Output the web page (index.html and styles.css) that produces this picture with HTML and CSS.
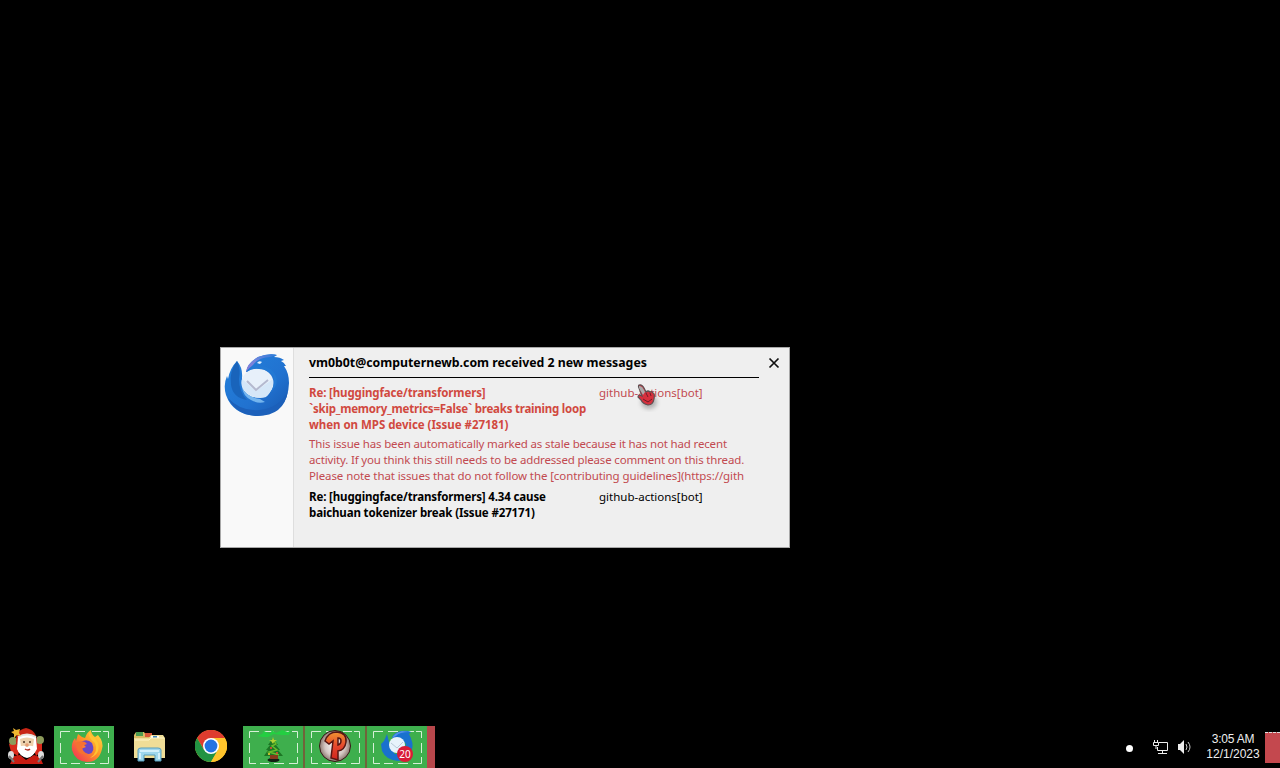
FILE: index.html
```html
<!DOCTYPE html>
<html lang="en">
<head>
    <meta charset="UTF-8">
    <meta name="viewport" content="width=device-width, initial-scale=1.0">
    <title>Desktop</title>
    <link rel="stylesheet" href="styles.css">
</head>
<body>
    <main class="desktop">
        <section class="alert">
            <div class="alert-side">
                <svg width="66" height="64" viewBox="0 0 66 64">
                    <defs>
                        <linearGradient id="bird" x1="0" y1="0" x2="1" y2="1">
                            <stop offset="0" stop-color="#2381dc"/>
                            <stop offset="0.6" stop-color="#2172d0"/>
                            <stop offset="1" stop-color="#1857af"/>
                        </linearGradient>
                        <linearGradient id="crest" x1="0" y1="1" x2="1" y2="0">
                            <stop offset="0" stop-color="#8b79d5"/>
                            <stop offset="0.5" stop-color="#6f86dd"/>
                            <stop offset="1" stop-color="#2c7bd8"/>
                        </linearGradient>
                    </defs>
                    <path d="M13 7Q19 14 18 24L19 35L28 43L43 42L49 30Q46 18 35 17L22 18Q23 10 34 3Q45-1 53 1L50 3Q56 3 60 6L57 7Q61 9 62 12L60 12Q65 19 65 29Q64 60 33 62Q9 61 2 41Q-1 31 3 22L4 25Q6 14 13 7Z" fill="url(#bird)"/>
                    <path d="M22 18Q23 9 34 3Q44-1 53 1L46 3Q35 3 29 11Q25 14 22 18Z" fill="url(#crest)"/>
                    <path d="M13 7Q17 15 15 25Q15 38 23 46Q9 44 7 31Q5 17 13 7Z" fill="#1964bb"/>
                    <ellipse cx="33.5" cy="29" rx="16" ry="14.5" fill="#e7f0fa"/>
                    <path d="M18 25L32 37L49 25Q50 36 42 43Q33 46 24 40Q16 34 18 25Z" fill="#d5e7f8"/>
                    <path d="M18 33Q22 43 36 45L41 48Q34 50 27 46Q19 42 18 33Z" fill="#74b5ee"/>
                    <path d="M23 27L32 36L44 26" fill="none" stroke="#b4b9cf" stroke-width="2"/>
                    <path d="M22 18Q28 14 35 15Q44 15 49 22Q52 30 46 39Q55 31 52 22Q48 13 38 12Q28 10 22 18Z" fill="#2379d4"/>
                    <path d="M4 44Q17 58 36 56Q55 54 64 37Q60 62 33 62Q12 61 4 44Z" fill="#1c60ba"/>
                    <path d="M33 9Q35 6 38 8L36 10Z" fill="#e3f1ff"/>
                </svg>
            </div>
            <div class="alert-body">
                <header class="alert-header">
                    <h1>vm0b0t@computernewb.com received 2 new messages</h1>
                </header>
                <article class="message selected">
                    <div class="message-row">
                        <h2 class="subject">
                            <span>Re: [huggingface/transformers]</span>
                            <span class="long">`skip_memory_metrics=False` breaks training loop</span>
                            <span class="short">when on MPS device (Issue #27181)</span>
                        </h2>
                        <div class="sender">github-actions[bot]</div>
                    </div>
                    <p class="preview">
                        <span>This issue has been automatically marked as stale because it has not had recent</span>
                        <span>activity. If you think this still needs to be addressed please comment on this thread.</span>
                        <span class="last">Please note that issues that do not follow the [contributing guidelines](https://gith</span>
                    </p>
                </article>
                <article class="message">
                    <div class="message-row">
                        <h2 class="subject">
                            <span>Re: [huggingface/transformers] 4.34 cause</span>
                            <span>baichuan tokenizer break (Issue #27171)</span>
                        </h2>
                        <div class="sender">github-actions[bot]</div>
                    </div>
                </article>
            </div>
            <div class="alert-close">
                <svg width="12" height="12" viewBox="0 0 12 12"><path d="M1.5 1.5L10.5 10.5M10.5 1.5L1.5 10.5" stroke="#111" stroke-width="1.7"/></svg>
            </div>
        </section>
        <svg class="cursor" width="24" height="28" viewBox="0 0 24 28">
            <ellipse cx="12" cy="18" rx="8" ry="7" fill="#555" opacity="0.4" class="cursor-shadow"/>
            <path d="M2 1Q5 0 7 4L9 8Q11 6 13 8Q15 7 16 9Q18 9 17 15Q16 21 11 21Q6 20 4 16L1 13Q1 10 5 12L2 4Q1 2 2 1Z" fill="#d7303d" stroke="#5d5053" stroke-width="1.2"/>
            <path d="M2 2Q5 1 8 8L6 11L2 4Z" fill="#aaa"/>
            <path d="M9 9L11 13M13 9L14 12M6 15L11 18L15 15" stroke="#701c28" fill="none"/>
        </svg>
    </main>
    <footer class="taskbar">
        <div class="task start">
            <svg width="40" height="38" viewBox="0 0 40 38">
                <path d="M4 37L8 29L14 28L20 33L28 28L34 30L37 37Z" fill="#c91c12"/>
                <path d="M3 17L8 14L14 20L12 29L5 25ZM36 16L31 14L27 20L30 29L36 24Z" fill="#d92b1c"/>
                <circle cx="7" cy="14" r="4" fill="#8c9b5b"/><circle cx="34" cy="13" r="4" fill="#8c9b5b"/>
                <path d="M10 16Q9 3 20 1Q31 3 31 16L28 20H13Z" fill="#c82515"/>
                <path d="M12 10Q20 5 30 10L31 22Q27 30 21 30Q14 29 11 22Z" fill="#fff"/>
                <path d="M14 12Q21 9 28 12L27 20Q21 23 15 20Z" fill="#edd1ac"/>
                <path d="M11 21Q17 17 21 20Q25 17 30 21Q28 30 21 31Q13 29 11 21Z" fill="#fff"/>
                <path d="M12 10Q21 5 30 10" fill="none" stroke="#e8e2da" stroke-width="2"/>
                <circle cx="18" cy="15" r="1" fill="#492f1e"/><circle cx="24" cy="15" r="1" fill="#492f1e"/>
                <circle cx="21" cy="18" r="1.8" fill="#e69d72"/>
                <path d="M19 22Q22 24 24 22" fill="none" stroke="#b22b20" stroke-width="1.5"/>
                <path d="M7 1L10 3L14 2L13 6L15 9L11 8L8 11L8 7L5 5L8 4Z" fill="#f0b830"/>
                <ellipse cx="5" cy="28" rx="3" ry="4" fill="#ddd"/><ellipse cx="35" cy="28" rx="3" ry="4" fill="#ddd"/>
                <path d="M3 29L8 35M37 29L32 35" stroke="#777" stroke-width="2"/>
            </svg>
        </div>
        <div class="task open firefox">
            <svg class="dashes" width="60" height="42" viewBox="0 0 60 42"><path d="M6.5 12V5.5H16M21 5.5H31M38 5.5H47M49 5.5H54.5V12M54.5 17V27M54.5 31V37.5H46M41 37.5H31M26 37.5H17M13 37.5H6.5V31M6.5 27V17"/></svg>
            <svg width="34" height="34" viewBox="0 0 34 34">
                <defs><linearGradient id="fox" x1="1" y1="0" x2="0" y2="1"><stop offset="0" stop-color="#ffe546"/><stop offset="0.45" stop-color="#ff9626"/><stop offset="1" stop-color="#ef255c"/></linearGradient></defs>
                <path d="M8 5L12 8L15 9Q17 3 21 1Q21 5 25 8L28 6Q34 13 32 20Q29 33 17 33Q5 32 2 21Q1 14 5 9L6 12Z" fill="url(#fox)"/>
                <path d="M11 13Q17 9 22 14Q26 23 19 25Q13 25 11 20L16 18Z" fill="#6847c7"/>
                <path d="M5 14Q10 11 15 13L17 15L12 17Q12 23 18 25Q12 27 8 22Z" fill="#f57132"/>
                <path d="M19 3Q18 9 25 14Q29 23 20 29Q31 25 28 14L25 9Q21 7 19 3Z" fill="#ffc532"/>
            </svg>
        </div>
        <div class="task">
            <svg width="34" height="32" viewBox="0 0 34 32">
                <path d="M2 5L4 2H12L14 5H31V28H2Z" fill="#d9bd65"/>
                <path d="M4 2H11V6H4Z" fill="#4b9b51"/><path d="M13 3H20V7H13Z" fill="#d85739"/>
                <path d="M2 8H17L19 5H31L33 8V28H2Z" fill="#efdd97"/>
                <path d="M19 6H27V8H19Z" fill="#fff"/><path d="M21 6H25V8H21Z" fill="#4187bd"/>
                <path d="M3 10H17L19 8H32" fill="none" stroke="#fff6c8"/>
                <path d="M6 31V20Q6 18 9 18H26Q29 18 29 20V31H23V25H12V31Z" fill="#9ed7ed" stroke="#579ebc"/>
                <path d="M8 21H27M8 23V29M27 23V29" fill="none" stroke="#e4f9ff" stroke-width="1.5"/>
            </svg>
        </div>
        <div class="task">
            <svg width="32" height="32" viewBox="0 0 32 32">
                <circle cx="16" cy="16" r="16" fill="#ffc42c"/>
                <path d="M2.1 8A16 16 0 0 1 29.9 8H16L9.1 20Z" fill="#de3c2e"/>
                <path d="M2.1 8A16 16 0 0 0 16 32L22.9 20H9.1Z" fill="#229342"/>
                <path d="M29.9 8A16 16 0 0 1 16 32L22.9 20L16 8Z" fill="#ffc42c"/>
                <circle cx="16" cy="16" r="8" fill="#fff"/><circle cx="16" cy="16" r="6.4" fill="#2373e3"/>
            </svg>
        </div>
        <div class="task open">
            <svg class="dashes" width="60" height="42" viewBox="0 0 60 42"><path d="M6.5 12V5.5H16M21 5.5H31M38 5.5H47M49 5.5H54.5V12M54.5 17V27M54.5 31V37.5H46M41 37.5H31M26 37.5H17M13 37.5H6.5V31M6.5 27V17"/></svg>
            <svg width="36" height="34" viewBox="0 0 36 34">
                <path d="M2 7L7 5L9 2L15 5L17 1L21 4L27 1L33 3L36 1L34 6L26 6L19 5L13 8L8 8Z" fill="#24ce42"/>
                <path d="M18 9L23 16L21 16L25 21L23 21L28 27H9L13 21L11 21L15 16L13 16Z" fill="#1c7624"/>
                <path d="M18 10L21 15L17 17L22 21L14 23L24 26" fill="none" stroke="#67bb2c" stroke-width="1.5"/>
                <path d="M18 8L19 11L22 11L19 13L18 15L16 12L14 11H17Z" fill="#b2d235"/>
                <circle cx="16" cy="19" r="1" fill="#ed4939"/><circle cx="22" cy="24" r="1" fill="#ed4939"/><circle cx="14" cy="25" r="1" fill="#f4d537"/>
                <ellipse cx="18.5" cy="31" rx="6" ry="2" fill="#111e12"/><path d="M15 26H23V30H15Z" fill="#863a1b"/>
            </svg>
        </div>
        <div class="task open">
            <svg class="dashes" width="60" height="42" viewBox="0 0 60 42"><path d="M6.5 12V5.5H16M21 5.5H31M38 5.5H47M49 5.5H54.5V12M54.5 17V27M54.5 31V37.5H46M41 37.5H31M26 37.5H17M13 37.5H6.5V31M6.5 27V17"/></svg>
            <svg width="34" height="34" viewBox="0 0 34 34">
                <defs>
                    <radialGradient id="ball"><stop offset="0" stop-color="#fff"/><stop offset="0.65" stop-color="#d4c6c2"/><stop offset="1" stop-color="#8b7770"/></radialGradient>
                    <linearGradient id="pin" x1="0" y1="0" x2="0" y2="1"><stop offset="0" stop-color="#f09431"/><stop offset="0.5" stop-color="#e5472d"/><stop offset="1" stop-color="#cf241c"/></linearGradient>
                </defs>
                <circle cx="17" cy="17" r="15.5" fill="url(#ball)" stroke="#341814"/>
                <path d="M7 12Q10 3 19 3Q29 4 28 13Q27 21 20 22L20 31L13 29L15 12L11 15ZM20 9L20 16Q23 15 23 12Q23 9 20 9Z" fill="url(#pin)" fill-rule="evenodd" stroke="#571612" stroke-width="1.5"/>
            </svg>
        </div>
        <div class="task open stacked">
            <svg class="dashes" width="60" height="42" viewBox="0 0 60 42"><path d="M6.5 12V5.5H16M21 5.5H31M38 5.5H47M49 5.5H54.5V12M54.5 17V27M54.5 31V37.5H46M41 37.5H31M26 37.5H17M13 37.5H6.5V31M6.5 27V17"/></svg>
            <svg width="34" height="34" viewBox="0 0 34 34">
                <path d="M7 5L10 17L15 25L24 24L26 15L20 9L12 9Q13 4 21 2Q27 1 31 3L29 5Q34 14 32 21Q28 31 18 32Q6 31 2 22L1 15L4 12Z" fill="#1971ce"/>
                <path d="M12 9Q14 4 22 2L30 3Q19 3 16 7Z" fill="#538eea"/>
                <circle cx="17" cy="16" r="8" fill="#e7f3fb"/>
                <path d="M11 14L17 19L23 13" fill="none" stroke="#b9cbd9"/>
            </svg>
            <span class="badge">20</span>
        </div>
        <div class="tray">
            <span class="tray-dot"></span>
            <svg class="network" width="16" height="16" viewBox="0 0 16 16"><path d="M6 3.5H14.5V11.5H4.5V8M9.5 12V14M5 14.5H14M1.5 1V4M4.5 1V4M0.5 3.5H5.5V6.5H0.5V3.5M3 7V10" fill="none" stroke="#eee"/></svg>
            <svg class="volume" width="16" height="16" viewBox="0 0 16 16"><path d="M1 5H3L7 1V15L3 11H1Z" fill="#eee"/><path d="M9 5Q11 8 9 11M11 3Q15 8 11 13" fill="none" stroke="#ccc"/></svg>
            <div class="clock"><span class="time">3:05 AM</span><span>12/1/2023</span></div>
            <div class="show-desktop"></div>
        </div>
    </footer>
</body>
</html>
```
FILE: styles.css
```css
* {
    box-sizing: border-box;
}
body {
    margin: 0;
    height: 768px;
    display: flex;
    flex-direction: column;
    overflow: hidden;
    background-color: #000;
    font-family: "Noto Sans", "Open Sans", sans-serif;
    font-size: 12px;
}
h1, h2, p {
    margin: 0;
}
svg {
    display: block;
    flex: none;
}
.desktop {
    flex: 1;
    position: relative;
}
.alert {
    position: absolute;
    left: 220px;
    top: 347px;
    width: 570px;
    height: 201px;
    display: flex;
    background-color: #efefef;
    border: 1px solid #a8a8a8;
    color: #000;
}
.alert-side {
    width: 73px;
    padding: 6px 0 0 3px;
    background-color: #f9f9f9;
    border-right: 1px solid #dedede;
}
.alert-body {
    width: 450px;
    margin-left: 15px;
}
.alert-header {
    height: 30px;
    border-bottom: 1px solid #000;
}
.alert-header h1 {
    font-size: 12.3px;
    line-height: 30px;
}
.alert-close {
    padding: 9px 0 0 9px;
}
.message {
    padding-top: 7px;
    font-size: 11.5px;
    line-height: 16px;
}
.message + .message {
    padding-top: 5px;
}
.message-row {
    display: flex;
}
.subject {
    width: 290px;
    font-size: 11.5px;
    letter-spacing: -0.14px;
}
.subject span, .preview span {
    display: table;
    white-space: nowrap;
}
.subject .long {
    letter-spacing: -0.22px;
}
.subject .short {
    letter-spacing: -0.04px;
}
.preview {
    margin-top: 3px;
    letter-spacing: -0.16px;
}
.preview .last {
    letter-spacing: -0.1px;
}
.selected {
    color: #c24a50;
}
.selected .subject {
    color: #d1493f;
}
.cursor {
    position: absolute;
    left: 637px;
    top: 384px;
}
.cursor-shadow {
    filter: blur(2px);
}
.taskbar {
    height: 42px;
    display: flex;
}
.task {
    position: relative;
    width: 60px;
    margin-right: 2px;
    padding-bottom: 2px;
    display: flex;
    align-items: center;
    justify-content: center;
}
.start {
    width: 52px;
}
.task.open {
    background-color: #3eaf4d;
}
.task.firefox {
    padding-left: 5px;
    margin-right: 5px;
}
.task.open + .task.open {
    box-shadow: -2px 0 0 #71633b;
}
.task.open + .task.stacked {
    box-shadow: -2px 0 0 #71633b, 8px 0 0 #b7474b;
}
.dashes {
    position: absolute;
    left: 0;
    top: 0;
    fill: none;
    stroke: #d6f0d7;
}
.task > svg:not(.dashes) {
    z-index: 1;
}
.badge {
    position: absolute;
    z-index: 2;
    left: 30px;
    top: 20px;
    width: 16px;
    height: 16px;
    border-radius: 50%;
    background-color: #d91b38;
    color: #fff;
    font-size: 10px;
    line-height: 16px;
    text-align: center;
}
.tray {
    margin-left: auto;
    display: flex;
    align-items: center;
}
.tray-dot {
    width: 7px;
    height: 7px;
    margin: 2px 20px 0 0;
    border-radius: 50%;
    background-color: #fff;
}
.network {
    margin-right: 8px;
}
.volume {
    margin-right: 12px;
}
.clock {
    width: 56px;
    margin-right: 4px;
    display: flex;
    flex-direction: column;
    align-items: center;
    color: #eee;
    font-family: "Liberation Sans", Arial, sans-serif;
    line-height: 15px;
}
.clock .time {
    letter-spacing: -0.25px;
}
.show-desktop {
    width: 15px;
    height: 31px;
    background-color: #c4484e;
    border-top: 1px dashed #ddd;
}
```
